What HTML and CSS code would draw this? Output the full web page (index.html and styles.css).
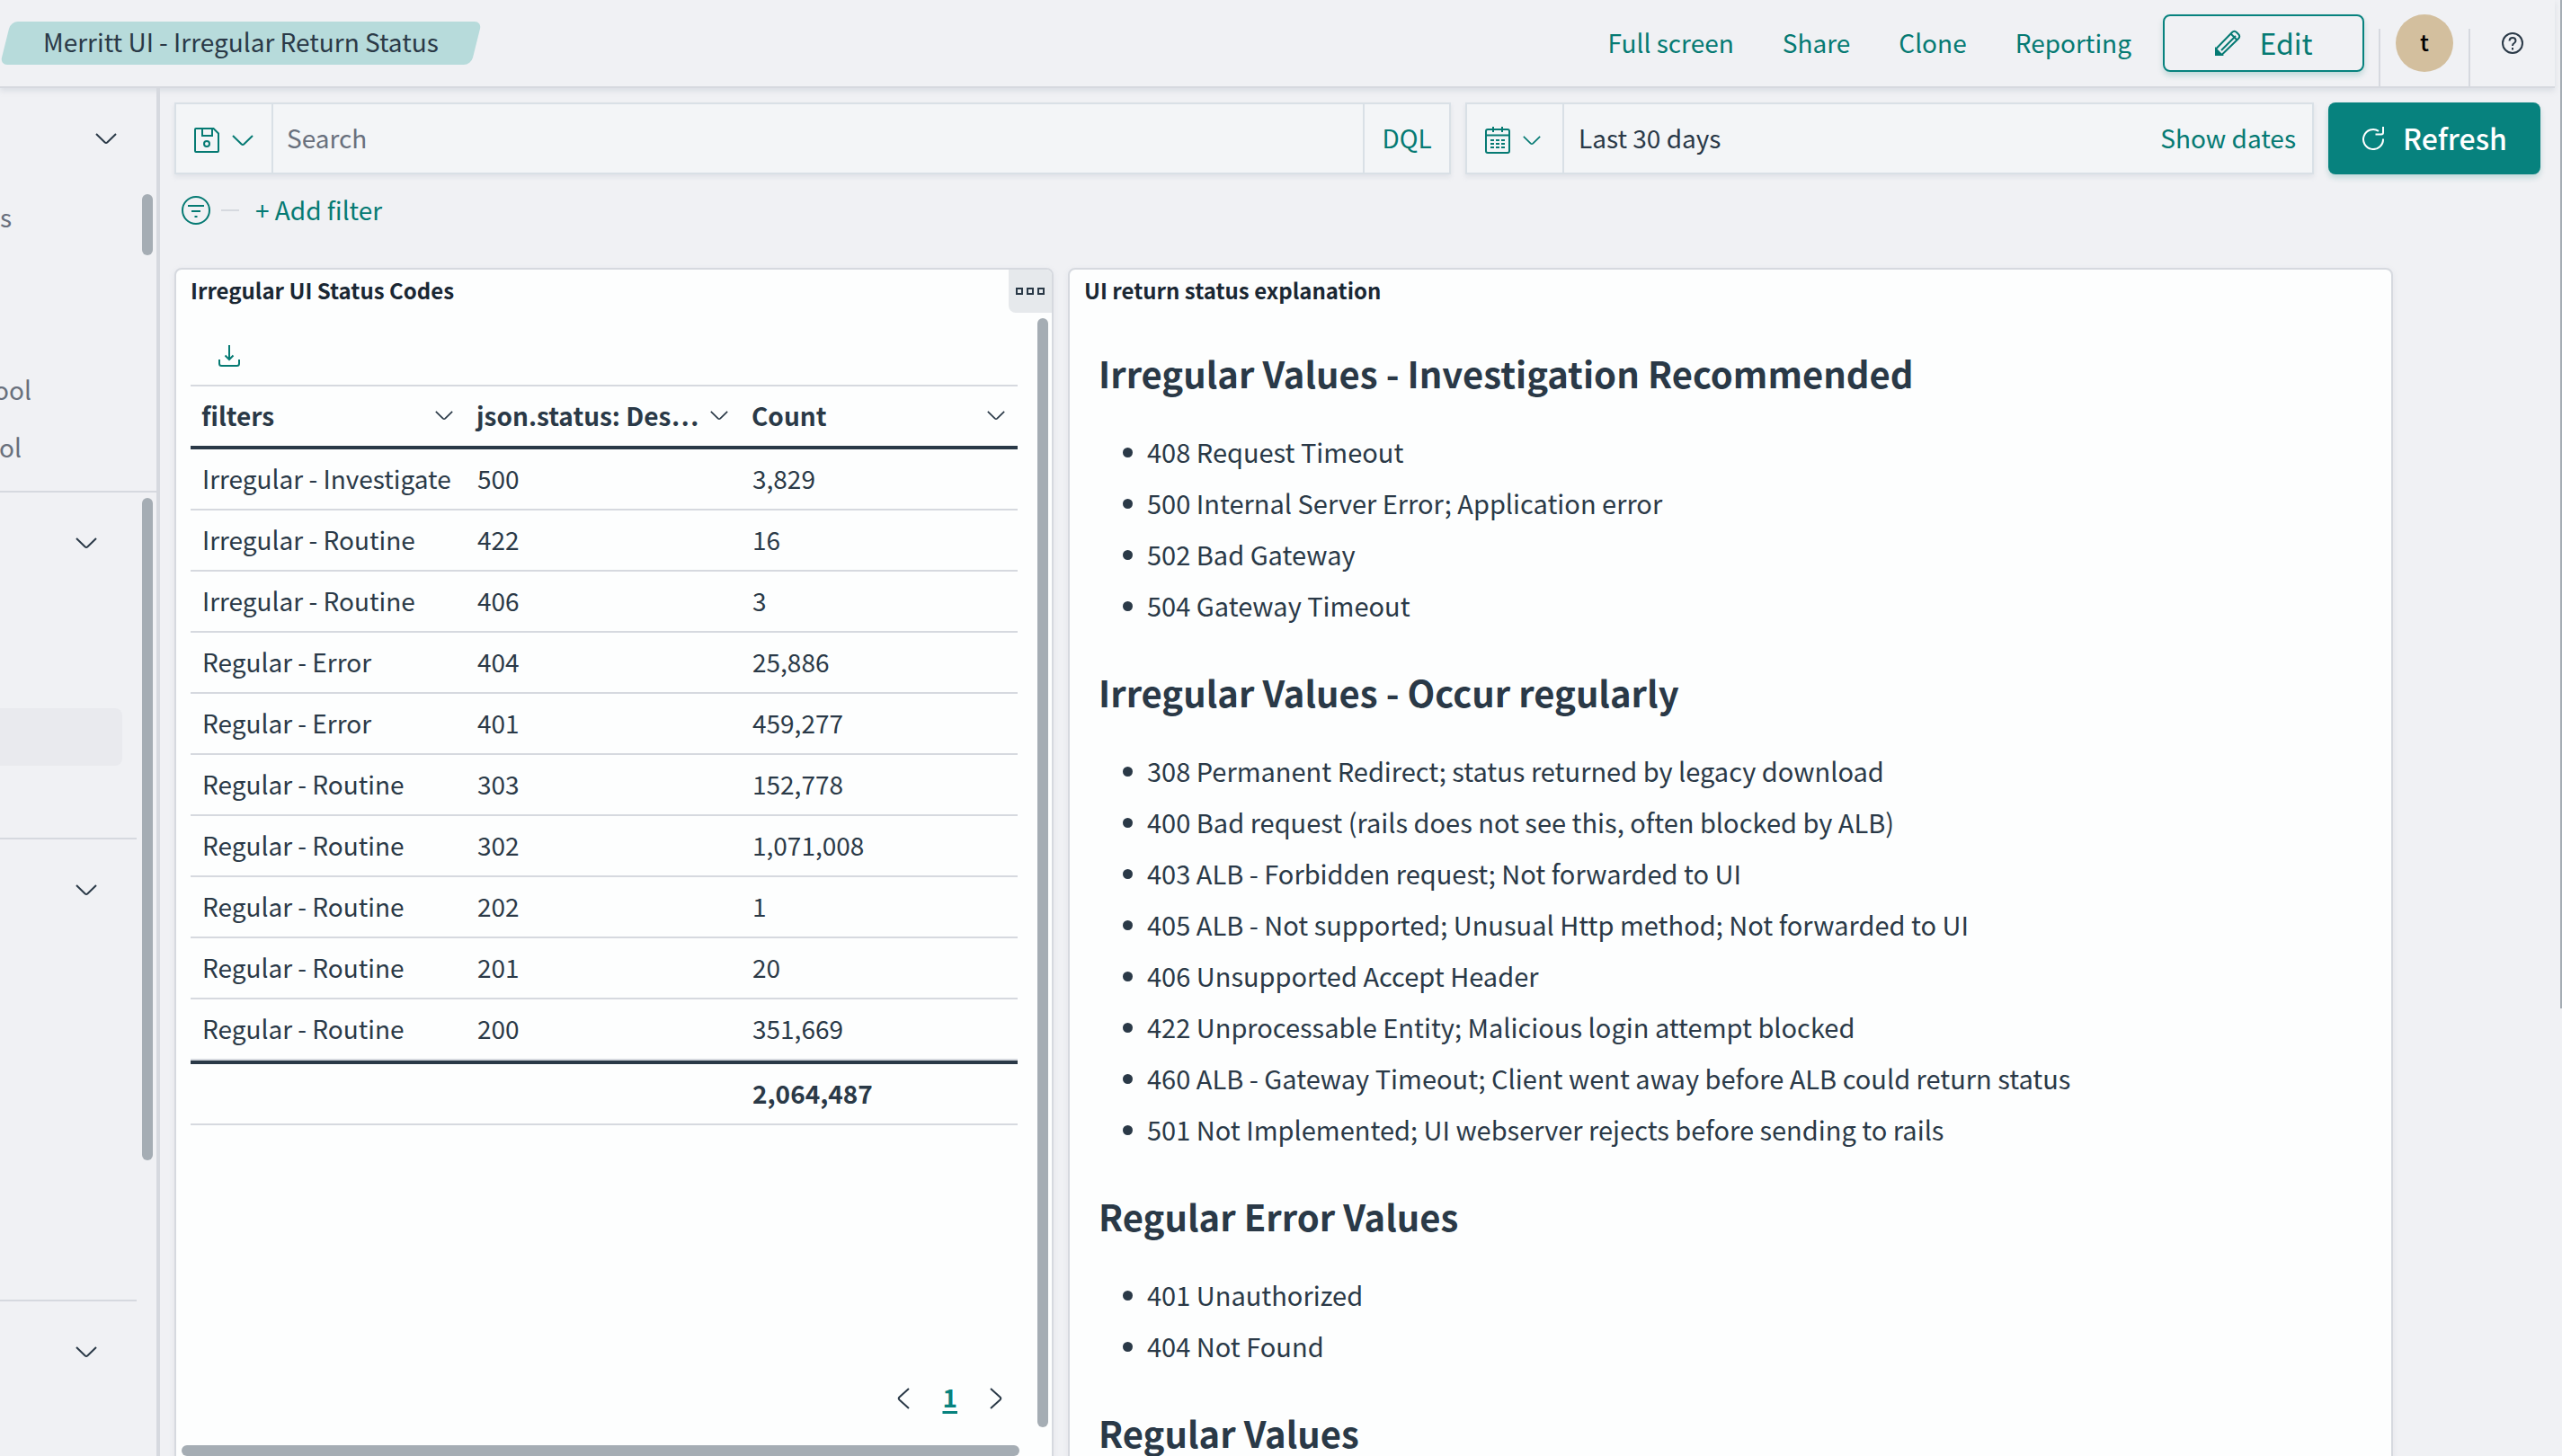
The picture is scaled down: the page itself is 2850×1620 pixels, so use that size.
FILE: index.html
```html
<!DOCTYPE html>
<html lang="en">
<head>
<meta charset="utf-8">
<title>Merritt UI - Irregular Return Status</title>
<link rel="stylesheet" href="styles.css">
</head>
<body>
<svg class="sprite" aria-hidden="true">
  <symbol id="down" viewBox="0 0 24 14"><path d="M1 2 10.500 11.300Q12 12.600 13.500 11.300L23 2"/></symbol>
</svg>
<header class="topbar">
  <div class="crumb"><span class="crumb-text">Merritt UI - Irregular Return Status</span></div>
  <nav class="actions">
    <a href="#full">Full screen</a>
    <a href="#share">Share</a>
    <a href="#clone">Clone</a>
    <a href="#reporting">Reporting</a>
  </nav>
  <button class="btn edit" type="button">
    <svg class="i-30" viewBox="0 0 30 30"><path d="M2 21.500 20 3Q22.500.500 25 3L27 5Q29.500 7.500 27 10L8.500 28H2ZM8 23 24 7M18.500 4.500 25.500 11.500"/><path class="solid" d="M2 21.500 8.500 28H2Z"/></svg>
    <span class="btn-text">Edit</span></button>
  <button class="account" type="button" aria-label="Account"><span class="avatar">t</span></button>
  <button class="help" type="button" aria-label="Help">
    <svg class="i-24" viewBox="0 0 24 24"><circle cx="12" cy="12" r="11"/><path d="M8.500 9.500Q8.700 6 12 6T15.500 9.200Q15.500 11 13.800 12T12 15M12 17v2.500"/></svg>
  </button>
</header>
<div class="shell">
  <aside class="side">
    <section class="side-top">
      <button class="toggle far" type="button" aria-label="Recently visited"><svg class="i-chev"><use href="#down"/></svg></button>
      <a class="side-link first" href="#s">s</a>
      <a class="side-link second" href="#ool">ool</a>
      <a class="side-link third" href="#ol">ol</a>
      <span class="thumb thumb-a"></span>
    </section>
    <section class="side-rest">
      <div class="group g1">
        <button class="toggle" type="button" aria-label="Dashboards group"><svg class="i-chev"><use href="#down"/></svg></button>
        <div class="current"></div>
      </div>
      <div class="group g2">
        <button class="toggle" type="button" aria-label="Plugins group"><svg class="i-chev"><use href="#down"/></svg></button>
      </div>
      <div class="group g3">
        <button class="toggle" type="button" aria-label="Management group"><svg class="i-chev"><use href="#down"/></svg></button>
      </div>
      <span class="thumb thumb-b"></span>
    </section>
  </aside>
  <main class="main">
    <form class="query">
      <div class="field">
        <button class="pick" type="button" aria-label="Saved queries">
          <svg class="i-28" viewBox="0 0 28 28"><path d="M2 1H21.500L27 6.500V26Q27 27 26 27H2Q1 27 1 26V2Q1 1 2 1ZM9 1v8h11V1"/><circle cx="14" cy="18" r="3"/></svg>
          <svg class="i-chev"><use href="#down"/></svg>
        </button>
        <input class="search-input" type="text" placeholder="Search" aria-label="Search">
        <button class="link dql" type="button">DQL</button>
      </div>
      <div class="field dates">
        <button class="pick" type="button" aria-label="Quick date">
          <svg class="i-30 cal" viewBox="0 0 28 30"><path d="M3 3H25Q27 3 27 5V27Q27 29 25 29H3Q1 29 1 27V5Q1 3 3 3ZM1 9.500H27M9 0v6M19 0v6"/><path d="M6 15h4M12 15h4M18 15h4M6 19h4M12 19h4M18 19h4M6 23h4M12 23h4M18 23h4"/></svg>
          <svg class="i-chev small"><use href="#down"/></svg>
        </button>
        <span class="range">Last 30 days</span>
        <button class="link" type="button">Show dates</button>
      </div>
      <button class="btn refresh" type="button">
        <svg class="i-26" viewBox="0 0 26 26"><path d="M24 13.500A11 11 0 1 1 19 4.800M15.500 8.500H22Q24 8.500 24 6.500V0"/></svg>
        <span class="btn-text">Refresh</span></button>
    </form>
    <div class="filters">
      <svg class="i-34" viewBox="0 0 34 34"><circle cx="17" cy="17" r="15"/><path d="M8 12h18M12 18h10M15.500 24h3"/></svg>
      <span class="dash"></span>
      <button class="link" type="button">+ Add filter</button>
    </div>
    <div class="panels">
      <section class="panel">
        <h2 class="panel-title">Irregular UI Status Codes</h2>
        <button class="menu" type="button" aria-label="Panel options"><span class="sq"></span><span class="sq"></span><span class="sq"></span></button>
        <button class="download" type="button" aria-label="Download">
          <svg class="i-24" viewBox="0 0 24 24"><path d="M12 0v16M7.500 11.500 12 16l4.500-4.500M1 16v4.500Q1 23 3.500 23h17Q23 23 23 20.500V16"/></svg>
        </button>
        <table class="grid">
          <colgroup><col class="c1"><col class="c2"><col class="c3"></colgroup>
          <thead>
            <tr>
              <th scope="col"><div class="th"><span>filters</span><svg class="i-chev small"><use href="#down"/></svg></div></th>
              <th scope="col"><div class="th"><span>json.status: Des…</span><svg class="i-chev small"><use href="#down"/></svg></div></th>
              <th scope="col"><div class="th"><span>Count</span><svg class="i-chev small"><use href="#down"/></svg></div></th>
            </tr>
          </thead>
          <tbody>
            <tr><td>Irregular - Investigate</td><td>500</td><td>3,829</td></tr>
            <tr><td>Irregular - Routine</td><td>422</td><td>16</td></tr>
            <tr><td>Irregular - Routine</td><td>406</td><td>3</td></tr>
            <tr><td>Regular - Error</td><td>404</td><td>25,886</td></tr>
            <tr><td>Regular - Error</td><td>401</td><td>459,277</td></tr>
            <tr><td>Regular - Routine</td><td>303</td><td>152,778</td></tr>
            <tr><td>Regular - Routine</td><td>302</td><td>1,071,008</td></tr>
            <tr><td>Regular - Routine</td><td>202</td><td>1</td></tr>
            <tr><td>Regular - Routine</td><td>201</td><td>20</td></tr>
            <tr><td>Regular - Routine</td><td>200</td><td>351,669</td></tr>
          </tbody>
          <tfoot>
            <tr><td></td><td></td><td>2,064,487</td></tr>
          </tfoot>
        </table>
        <nav class="pager" aria-label="Pages">
          <button class="arrow" type="button" aria-label="Previous page"><svg class="i-arrow" viewBox="0 0 14 24"><path d="M13 1 2.500 10.500Q1 12 2.500 13.500L13 23"/></svg></button>
          <a class="page" href="#1">1</a>
          <button class="arrow" type="button" aria-label="Next page"><svg class="i-arrow" viewBox="0 0 14 24"><path d="M1 1 11.500 10.500Q13 12 11.500 13.500L1 23"/></svg></button>
        </nav>
        <span class="thumb thumb-c"></span>
        <span class="thumb thumb-d"></span>
      </section>
      <section class="panel">
        <h2 class="panel-title">UI return status explanation</h2>
        <div class="notes">
          <h3>Irregular Values - Investigation Recommended</h3>
          <ul>
            <li>408 Request Timeout</li>
            <li>500 Internal Server Error; Application error</li>
            <li>502 Bad Gateway</li>
            <li>504 Gateway Timeout</li>
          </ul>
          <h3>Irregular Values - Occur regularly</h3>
          <ul>
            <li>308 Permanent Redirect; status returned by legacy download</li>
            <li>400 Bad request (rails does not see this, often blocked by ALB)</li>
            <li>403 ALB - Forbidden request; Not forwarded to UI</li>
            <li>405 ALB - Not supported; Unusual Http method; Not forwarded to UI</li>
            <li>406 Unsupported Accept Header</li>
            <li>422 Unprocessable Entity; Malicious login attempt blocked</li>
            <li>460 ALB - Gateway Timeout; Client went away before ALB could return status</li>
            <li>501 Not Implemented; UI webserver rejects before sending to rails</li>
          </ul>
          <h3>Regular Error Values</h3>
          <ul>
            <li>401 Unauthorized</li>
            <li>404 Not Found</li>
          </ul>
          <h3>Regular Values</h3>
        </div>
      </section>
    </div>
  </main>
</div>
<span class="window-bar"></span>
</body>
</html>
```
FILE: styles.css
```css
* { box-sizing: border-box; }

:root {
  --ink: #2a3947;
  --teal: #057a73;
  --line: #d6d9df;
  --field-line: #d9e0e6;
  --thumb: #a5adb4;
}

body {
  margin: 0;
  height: 100vh;
  overflow: hidden;
  display: flex;
  flex-direction: column;
  background: #f0f1f4;
  color: var(--ink);
  font: 28px/44px "Noto Sans CJK SC", "Noto Sans", sans-serif;
}

button {
  font: inherit;
  color: inherit;
  background: none;
  border: 0;
  padding: 0;
}

svg { flex: none; fill: none; stroke: currentColor; stroke-width: 2; }
.solid { fill: currentColor; }
.sprite { display: none; }
.i-chev { width: 24px; height: 14px; }
.i-chev.small { width: 20px; height: 12px; }
.i-24 { width: 24px; height: 24px; }
.i-26 { width: 26px; height: 26px; }
.i-28 { width: 28px; height: 28px; }
.i-30 { width: 30px; height: 30px; }
.i-30.cal { width: 28px; }
.i-34 { width: 34px; height: 34px; }
.i-arrow { width: 14px; height: 24px; }

/* Header */
.topbar {
  flex: none;
  display: flex;
  align-items: center;
  height: 98px;
  margin-right: 8px;
  border-bottom: 2px solid var(--line);
  box-shadow: 0 3px 6px rgba(152, 162, 179, .25);
}
.crumb {
  position: relative;
  height: 48px;
  padding: 0 48px;
}
.crumb::before {
  content: "";
  position: absolute;
  inset: 0 6px;
  background: #b7dbdb;
  border-radius: 8px;
  transform: skewX(-14deg);
}
.crumb-text { position: relative; }
.actions {
  display: flex;
  gap: 54px;
  margin-left: auto;
  margin-right: 35px;
  padding-bottom: 3px;
}
a { color: var(--teal); text-decoration: none; }
.btn {
  display: flex;
  align-items: center;
  justify-content: center;
  gap: 20px;
  border-radius: 8px;
  font-size: 32px;
  box-shadow: 0 4px 6px rgba(5, 122, 115, .2);
}
.btn-text { padding-bottom: 3px; }
.edit {
  width: 224px;
  height: 64px;
  margin-right: 16px;
  border: 2px solid #07827e;
  color: var(--teal);
}
.account {
  align-self: flex-end;
  display: flex;
  justify-content: center;
  width: 102px;
  height: 64px;
  border: solid var(--line);
  border-width: 0 2px;
}
.avatar {
  width: 64px;
  height: 64px;
  margin-top: -16px;
  border-radius: 50%;
  background: #d3bf9e;
  color: #000;
  font-size: 25px;
  font-weight: 500;
  line-height: 60px;
  text-align: center;
}
.help { width: 94px; height: 24px; display: flex; justify-content: center; }

/* Sidebar */
.shell { flex: 1; min-height: 0; display: flex; }
.side {
  flex: none;
  width: 178px;
  border-right: 4px solid var(--line);
}
.side-top { position: relative; height: 450px; border-bottom: 2px solid var(--line); }
.side-rest { position: relative; }
.toggle { display: flex; width: 108px; justify-content: flex-end; padding-top: 49px; }
.toggle.far { width: 130px; }
.side-link { display: flex; justify-content: flex-end; margin-bottom: 20px; color: #69707d; }
.side-link.first { width: 13px; margin-top: 58px; margin-bottom: 148px; }
.side-link.second { width: 35px; }
.side-link.third { width: 24px; }
.group { width: 152px; border-bottom: 2px solid var(--line); }
.g1 { height: 386px; }
.g2 { height: 514px; }
.g3 { border: 0; }
.current {
  width: 136px;
  height: 64px;
  margin-top: 177px;
  border-radius: 0 8px 8px 0;
  background: #e9eaee;
}
.thumb { position: absolute; border-radius: 6px; background: var(--thumb); }
.thumb-a { top: 118px; right: 4px; width: 12px; height: 68px; }
.thumb-b { top: 6px; right: 4px; width: 12px; height: 737px; }

/* Query bar */
.main { flex: 1; min-width: 0; padding: 16px 24px 0 16px; display: flex; flex-direction: column; }
.query { display: grid; grid-template-columns: 1420fr 944fr 236px; gap: 16px; height: 80px; flex: none; }
.field {
  display: flex;
  align-items: center;
  min-width: 0;
  border: 2px solid var(--field-line);
  background: #f3f5f7;
  box-shadow: 0 3px 5px rgba(152, 162, 179, .18);
}
.dates { padding-right: 18px; }
.pick {
  align-self: stretch;
  width: 108px;
  display: flex;
  align-items: center;
  gap: 14px;
  padding: 4px 0 0 20px;
  border-right: 2px solid var(--field-line);
  color: var(--teal);
}
.search-input {
  flex: 1;
  min-width: 0;
  align-self: stretch;
  padding: 0 16px 3px 15px;
  border: 0;
  border-right: 2px solid var(--field-line);
  background: none;
  color: inherit;
  font: inherit;
}
.search-input::placeholder { color: #69707d; opacity: 1; }
.link { color: var(--teal); padding-bottom: 3px; }
.dql { width: 94px; }
.range { flex: 1; padding: 0 0 3px 16px; }
.refresh { background: #07827e; color: #fff; font-weight: 500; }
.filters {
  flex: none;
  display: flex;
  align-items: center;
  height: 80px;
  padding-left: 7px;
  color: var(--teal);
}
.dash { width: 20px; height: 2px; margin: 0 18px 0 11px; background: var(--line); }

/* Panels */
.panels {
  flex: 1;
  display: grid;
  grid-template-columns: 978fr 1474fr;
  gap: 16px;
  margin-top: 24px;
  margin-right: 164px;
}
.panel {
  position: relative;
  min-width: 0;
  height: 1400px;
  padding: 0 38px 0 16px;
  border: 2px solid var(--line);
  border-radius: 8px;
  background: #fdfefe;
  box-shadow: 0 2px 6px rgba(152, 162, 179, .15);
}
.panel-title {
  height: 48px;
  margin: 0;
  font-size: 24px;
  line-height: 46px;
  color: #1a2733;
}
.menu {
  position: absolute;
  top: 0;
  right: 0;
  width: 48px;
  height: 48px;
  display: flex;
  align-items: center;
  justify-content: center;
  gap: 4px;
  border-radius: 0 6px 0 8px;
  background: #e6e9ec;
}
.sq { width: 8px; height: 8px; border: 2px solid var(--ink); }
.download { display: block; height: 24px; margin: 35px 0 21px 31px; color: var(--teal); }
.panel .download { margin-top: 36px; margin-bottom: 20px; }
.download svg { display: block; }
.grid { width: 100%; border-collapse: separate; border-spacing: 0; table-layout: fixed; }
.c1 { width: 306px; }
.c2 { width: 306px; }
.grid th {
  height: 72px;
  padding: 0;
  border-top: 2px solid var(--line);
  border-bottom: 4px solid var(--ink);
  text-align: left;
}
.th { display: flex; align-items: center; justify-content: space-between; padding: 0 14px 3px 12px; }
.grid td {
  height: 68px;
  padding: 0 13px 3px;
  border-bottom: 2px solid var(--line);
  white-space: nowrap;
}
.grid tfoot td { height: 72px; border-top: 4px solid var(--ink); font-weight: 700; }
.pager {
  display: flex;
  align-items: center;
  justify-content: flex-end;
  gap: 36px;
  margin-top: 280px;
  padding-right: 17px;
}
.arrow { height: 24px; display: flex; }
.page {
  padding-bottom: 3px;
  color: #07827e;
  font-weight: 700;
  text-decoration: underline 3px;
  text-underline-offset: 4px;
}
.thumb-c { top: 54px; right: 4px; width: 12px; height: 1234px; }
.thumb-d { top: 1308px; left: 6px; width: 932px; height: 12px; }

.notes { padding: 37px 16px 0; }
.notes h3 { margin: 0; font-size: 40px; line-height: 60px; font-weight: 700; }
.notes ul { list-style: none; margin: 29px 0 38px; padding: 0 0 0 54px; font-size: 29px; }
.notes li { position: relative; line-height: 57px; }
.notes li::before {
  content: "";
  position: absolute;
  left: -27px;
  top: 24px;
  width: 11px;
  height: 11px;
  border-radius: 50%;
  background: var(--ink);
}

.window-bar { position: absolute; top: 0; right: 0; width: 2px; height: 1122px; background: var(--thumb); }
```
